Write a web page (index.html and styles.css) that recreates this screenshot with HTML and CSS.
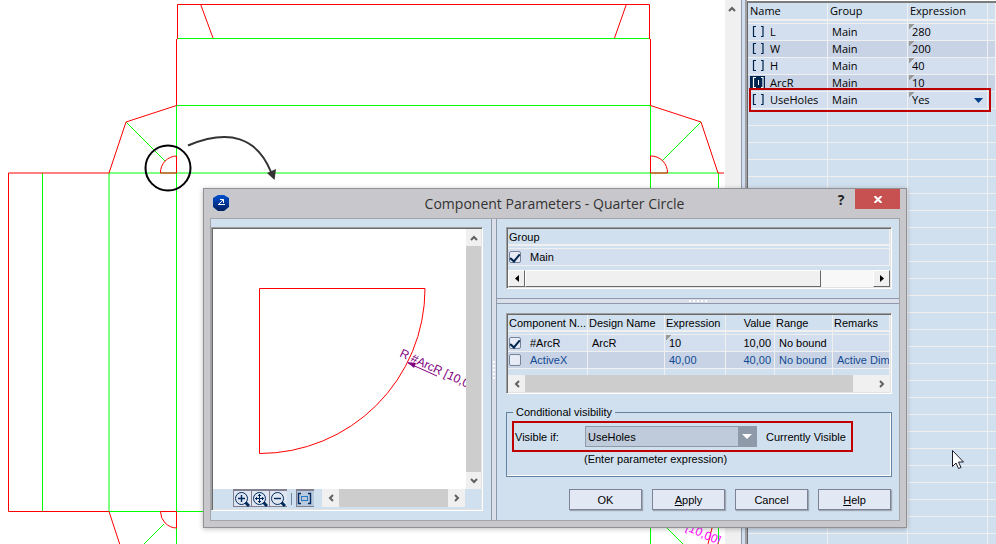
FILE: index.html
```
<!DOCTYPE html>
<html lang="en">
<head>
    <meta charset="UTF-8">
    <meta name="viewport" content="width=device-width, initial-scale=1.0">
    <title>Component Parameters - Quarter Circle</title>
    <link rel="stylesheet" href="styles.css">
</head>
<body>
    <svg class="defs" width="0" height="0">
        <symbol id="up" viewBox="0 0 8 6"><path d="M1 5L4 2L7 5" fill="none" stroke="#606060" stroke-width="2"/></symbol>
        <symbol id="down" viewBox="0 0 8 6"><path d="M1 1L4 4L7 1" fill="none" stroke="#606060" stroke-width="2"/></symbol>
        <symbol id="left" viewBox="0 0 6 8"><path d="M5 1L2 4L5 7" fill="none" stroke="#606060" stroke-width="2"/></symbol>
        <symbol id="right" viewBox="0 0 6 8"><path d="M1 1L4 4L1 7" fill="none" stroke="#606060" stroke-width="2"/></symbol>
        <symbol id="brackets" viewBox="0 0 13 11"><path d="M5 .5H2.500V10.500H5M10 .5h2v10H10" fill="none" stroke="currentColor" stroke-width="1.200"/></symbol>
    </svg>

    <main class="workspace">
        <div class="canvas">
            <svg class="drawing" fill="none">
                <g stroke="#00ff00">
                    <path d="M177 38.500H650M177 105.500H650M109 173H718M109 511.500H725"/>
                    <path d="M42.500 173V511M109 173V511M176.500 105V544M650.500 105V544M718.500 173V544"/>
                    <path d="M126 122L165 161M701 122L662 161M164 524L144 544M662 523L683 544"/>
                </g>
                <g stroke="#ff0000">
                    <path d="M177.500 39V4.500H649.500V39M200.500 4L213 38M626.500 4L614.500 38"/>
                    <path d="M176.500 39V105.500L126 122L109 173H8.500V511.500H109L120 545"/>
                    <path d="M650.500 39V105.500L701 122L718 173H724M712 528L708 544"/>
                    <path d="M176.500 156V173H160.500A16.500 16.500 0 0 1 176.500 156"/>
                    <path d="M650.500 156V173H667.500A16.500 16.500 0 0 0 650.500 156"/>
                    <path d="M176.500 528V511.500H160.500A16.500 16.500 0 0 0 176.500 528"/>
                </g>
                <circle cx="168" cy="168" r="22.500" stroke="#000" stroke-width="2"/>
                <path d="M188 145.500Q250 120 271 172" stroke="#333" stroke-width="2"/>
                <path d="M267 173L276 169L274.500 180Z" fill="#333"/>
                <text x="685" y="530" transform="rotate(24 685 530)" class="dim-pink">[10,00]</text>
            </svg>
        </div>
        <div class="main-scroll"><svg width="8" height="6"><use href="#up"/></svg></div>
        <div class="divider"></div>
        <section class="params">
            <table>
                <colgroup><col class="c80"><col class="c80"><col class="c80"><col></colgroup>
                <thead>
                    <tr><th>Name</th><th>Group</th><th>Expression</th><th></th></tr>
                </thead>
                <tbody>
                    <tr><td><svg class="br"><use href="#brackets"/></svg>L</td><td>Main</td><td class="expr">280</td><td></td></tr>
                    <tr><td><svg class="br"><use href="#brackets"/></svg>W</td><td>Main</td><td class="expr">200</td><td></td></tr>
                    <tr><td><svg class="br"><use href="#brackets"/></svg>H</td><td>Main</td><td class="expr">40</td><td></td></tr>
                    <tr><td><svg class="br on"><use href="#brackets"/><path d="M7.500 3V8" stroke="#fff"/></svg>ArcR</td><td>Main</td><td class="expr">10</td><td></td></tr>
                    <tr><td><svg class="br"><use href="#brackets"/></svg>UseHoles</td><td>Main</td><td class="expr"><div class="yes"><select aria-label="UseHoles"><option>Yes</option></select><svg width="9" height="5"><path d="M0 0H9L4.500 5Z" fill="#003f87"/></svg></div></td><td></td></tr>
                </tbody>
            </table>
            <div class="empty-rows"></div>
            <div class="highlight"></div>
        </section>
    </main>

    <div class="dialog" role="dialog" aria-labelledby="dlg-title">
        <header class="titlebar">
            <svg class="app-icon" width="16" height="16" viewBox="0 0 16 16">
                <defs><linearGradient id="blue" x2="0" y2="1"><stop stop-color="#0050d0"/><stop offset="1" stop-color="#001f60"/></linearGradient></defs>
                <path d="M5 0H11L16 3V12L11 16H5L0 12V3Z" fill="url(#blue)"/>
                <path d="M7 4.500H10.500V8M10.500 4.500L6 9M5 9.500H12" fill="none" stroke="#fff"/>
            </svg>
            <h1 id="dlg-title">Component Parameters - Quarter Circle</h1>
            <button class="help">?</button>
            <button class="close" aria-label="Close"><svg width="8" height="7"><path d="M.5 0L7.500 7M7.500 0L.5 7" stroke="#fff" stroke-width="2"/></svg></button>
        </header>
        <div class="client">
            <div class="left-pane">
                <div class="preview sunken">
                    <div class="preview-top">
                        <svg class="shape" fill="none">
                            <path d="M46.500 59.500H212A165.500 165 0 0 1 46.500 224.500Z" stroke="#ff0000"/>
                            <text x="186" y="127" transform="rotate(25 186 127)" class="dim">R #ArcR [10,00]</text>
                            <path d="M195 134L224 147" stroke="#800080"/>
                            <path d="M194 133L203 134L201 139Z" fill="#800080"/>
                        </svg>
                        <div class="vscroll">
                            <button aria-label="Up"><svg width="8" height="6"><use href="#up"/></svg></button>
                            <span class="thumb"></span>
                            <button aria-label="Down"><svg width="8" height="6"><use href="#down"/></svg></button>
                        </div>
                    </div>
                    <div class="toolbar">
                        <button class="tool" aria-label="Zoom in"><svg width="16" height="16" fill="none" stroke="#002a5c"><circle cx="7.500" cy="7.500" r="6"/><path d="M4 7.500H11M7.500 4V11" stroke-width="1.400"/><path d="M11.500 11.500L15 15" stroke-width="3"/></svg></button>
                        <button class="tool" aria-label="Zoom to fit"><svg width="16" height="16" fill="none" stroke="#002a5c"><circle cx="7.500" cy="7.500" r="6"/><path d="M3 7.500H12M7.500 3V12M6 4.500H9M6 10.500H9M4.500 6V9M10.500 6V9"/><path d="M11.500 11.500L15 15" stroke-width="3"/></svg></button>
                        <button class="tool" aria-label="Zoom out"><svg width="16" height="16" fill="none" stroke="#002a5c"><circle cx="7.500" cy="7.500" r="6"/><path d="M4 7.500H11" stroke-width="1.400"/><path d="M11.500 11.500L15 15" stroke-width="3"/></svg></button>
                        <span class="sep"></span>
                        <button class="tool pressed" aria-label="Show dimensions"><svg width="16" height="16" fill="none" stroke="#002a5c"><path d="M4 2.500H1.500V12.500H4M11 2.500H13.500V12.500H11" stroke-width="1.400"/><rect x="4.500" y="5.500" width="6" height="4" stroke="#2a78c0"/></svg></button>
                        <div class="hscroll">
                            <button aria-label="Left"><svg width="6" height="8"><use href="#left"/></svg></button>
                            <span class="thumb"></span>
                            <button aria-label="Right"><svg width="6" height="8"><use href="#right"/></svg></button>
                        </div>
                    </div>
                </div>
            </div>
            <div class="splitter-v"><span></span></div>
            <div class="right-pane">
                <div class="sunken group-list">
                    <table>
                        <thead><tr><th>Group</th></tr></thead>
                        <tbody><tr><td><label class="check"><input type="checkbox" checked>Main</label></td></tr></tbody>
                    </table>
                    <div class="classic-scroll">
                        <button aria-label="Left"><svg width="4" height="7"><path d="M4 0V7L0 3.500Z"/></svg></button>
                        <span class="thumb"></span>
                        <span class="track"></span>
                        <button aria-label="Right"><svg width="4" height="7"><path d="M0 0V7L4 3.500Z"/></svg></button>
                    </div>
                </div>
                <div class="splitter-h"><span></span></div>
                <div class="sunken components">
                    <table>
                        <colgroup><col class="c80"><col class="c77"><col class="c61"><col class="c49"><col class="c58"><col></colgroup>
                        <thead>
                            <tr><th>Component N...</th><th>Design Name</th><th>Expression</th><th class="num">Value</th><th>Range</th><th>Remarks</th></tr>
                        </thead>
                        <tbody>
                            <tr><td><label class="check"><input type="checkbox" checked>#ArcR</label></td><td>ArcR</td><td class="expr">10</td><td class="num">10,00</td><td>No bound</td><td></td></tr>
                            <tr class="dimmed"><td><label class="check"><input type="checkbox">ActiveX</label></td><td></td><td>40,00</td><td class="num">40,00</td><td>No bound</td><td>Active Dime</td></tr>
                            <tr class="blank"><td></td><td></td><td></td><td></td><td></td><td></td></tr>
                        </tbody>
                    </table>
                    <div class="hscroll">
                        <button aria-label="Left"><svg width="6" height="8"><use href="#left"/></svg></button>
                        <span class="thumb"></span>
                        <span class="rest"></span>
                        <button aria-label="Right"><svg width="6" height="8"><use href="#right"/></svg></button>
                    </div>
                </div>
                <fieldset>
                    <legend>Conditional visibility</legend>
                    <div class="visible-row">
                        <label for="visible-if">Visible if:</label>
                        <div class="combo">
                            <select id="visible-if"><option>UseHoles</option></select>
                            <span class="combo-arrow"><svg width="10" height="5"><path d="M0 0H10L5 5Z" fill="#fff"/></svg></span>
                        </div>
                        <span>Currently Visible</span>
                    </div>
                    <p>(Enter parameter expression)</p>
                </fieldset>
                <div class="actions">
                    <button>OK</button>
                    <button><u>A</u>pply</button>
                    <button>Cancel</button>
                    <button><u>H</u>elp</button>
                </div>
            </div>
        </div>
    </div>

    <svg class="cursor" width="12" height="20"><path d="M.5 .5V16.500L4 13L6.500 18.500L9 17.500L6.500 12H11.500Z" fill="#fff" stroke="#1a1a2a"/></svg>
</body>
</html>
```
FILE: styles.css
```
* {
    box-sizing: border-box;
}

body {
    margin: 0;
    height: 100vh;
    overflow: hidden;
    position: relative;
    font-family: "Liberation Sans", Arial, sans-serif;
    font-size: 11px;
    line-height: 16px;
    color: #000;
    background: #fff;
}

svg {
    display: block;
    flex: none;
}

.defs {
    position: absolute;
}

button,
select {
    font: inherit;
    color: inherit;
    padding: 0;
    margin: 0;
    border: 0;
    background: none;
}

select {
    appearance: none;
    outline: none;
}

table {
    width: 100%;
    table-layout: fixed;
    border-spacing: 0;
}

th,
td {
    padding: 0 0 0 4px;
    height: 17px;
    text-align: left;
    font-weight: normal;
    white-space: nowrap;
    overflow: hidden;
    border-right: 1px solid #f0f0f0;
    border-bottom: 1px solid #f0f0f0;
}

th {
    height: 20px;
    padding: 0 0 0 1px;
    vertical-align: top;
    background: linear-gradient(#f0f0f0, #f0f0f0) 0 calc(100% - 2px) / 100% 2px no-repeat;
}

tbody tr {
    background: #d3deee;
}

tbody tr:nth-child(even) {
    background: #c8d3e5;
}

.expr {
    background: linear-gradient(135deg, #999 4px, transparent 4px) 1px 0 no-repeat;
}

.c80 { width: 80px; }
.c77 { width: 77px; }
.c61 { width: 61px; }
.c49 { width: 49px; }
.c58 { width: 58px; }

/* workspace */
.workspace {
    display: flex;
    height: 100%;
}

.canvas {
    flex: 1;
    min-width: 0;
    overflow: hidden;
}

.drawing {
    width: 100%;
    height: 100%;
}

.dim-pink {
    font-size: 12px;
    fill: #f0f;
}

.dim {
    font-size: 12px;
    fill: #800080;
}

.main-scroll {
    width: 16px;
    padding: 6px 3px;
    background: #f0f0f0;
}

.divider {
    width: 6px;
    background: #d2deee;
    border-left: 1px solid #8f9aae;
    border-right: 2px solid #a0a0a4;
}

/* parameter list on the right */
.params {
    position: relative;
    display: flex;
    flex-direction: column;
    width: 249px;
    margin-top: 1px;
    border-top: 2px solid #7c7c7c;
    border-left: 1px solid #696969;
    background: #d1e0ef;
    font-family: "Open Sans", sans-serif;
}

.params th {
    height: 21px;
    padding-left: 2px;
}

.params td {
    padding-right: 4px;
}

.params td:first-child {
    padding: 0 0 0 2px;
}

.br {
    display: inline-block;
    vertical-align: top;
    width: 15px;
    height: 13px;
    margin: 1px 5px 0 0;
    padding: 1px;
    color: #00264f;
}

.br.on {
    background: #00264f;
    color: #fff;
}

.yes {
    display: flex;
    align-items: center;
    justify-content: space-between;
}

.yes select {
    width: 40px;
    height: 16px;
}

.empty-rows {
    flex: 1;
    background:
        linear-gradient(90deg, transparent 79px, #f0f0f0 79px, #f0f0f0 80px, transparent 80px) 0 0 / 80px 100%,
        repeating-linear-gradient(#d1e0ef 0, #d1e0ef 16px, #f0f0f0 16px, #f0f0f0 17px);
}

.highlight {
    position: absolute;
    top: 85px;
    left: 1px;
    right: 5px;
    height: 24px;
    border: 2px solid #c00000;
}

/* dialog window */
.dialog {
    position: absolute;
    top: 188px;
    left: 203px;
    width: 704px;
    padding: 0 6px 6px;
    border: 1px solid #8f9195;
    background: #c8c8cc;
    box-shadow: 0 1px 5px rgba(0, 0, 0, 0.25);
}

.titlebar {
    display: flex;
    align-items: flex-start;
    height: 29px;
}

.app-icon {
    margin: 6px 0 0 3px;
}

.titlebar h1 {
    flex: 1;
    margin: 5px 0 0;
    padding-left: 53px;
    text-align: center;
    font: 14px/20px "Open Sans", sans-serif;
    color: #333;
}

.help {
    width: 28px;
    height: 20px;
    font: bold 14px "Open Sans", sans-serif;
    color: #222;
}

.close {
    display: flex;
    align-items: center;
    justify-content: center;
    width: 45px;
    height: 20px;
    background: #c75050;
}

.client {
    display: flex;
    height: 303px;
    border: 1px solid #a3a5a9;
    background: #d1e0ef;
}

.sunken {
    display: flex;
    flex-direction: column;
    padding: 1px;
    border: 1px solid;
    border-color: #a0a0a0 #fff #fff #a0a0a0;
    box-shadow: inset 1px 1px #696969, inset -1px -1px #e3e3e3;
}

.left-pane {
    display: flex;
    flex: none;
    width: 280px;
    padding: 8px 8px 9px 0;
}

.preview {
    flex: 1;
    min-width: 0;
}

.preview-top {
    display: flex;
    flex: 1;
    background: #fff;
}

.shape {
    flex: 1;
    width: 0;
    min-width: 0;
    height: 100%;
    overflow: hidden;
}

.vscroll {
    display: flex;
    flex-direction: column;
    width: 15px;
    background: #f0f0f0;
}

.vscroll button,
.hscroll button {
    display: flex;
    align-items: center;
    justify-content: center;
    flex: none;
    width: 17px;
    height: 17px;
}

.vscroll button {
    width: 15px;
}

.vscroll .thumb,
.hscroll .thumb {
    flex: 1;
    background: #cdcdcd;
}

.hscroll {
    display: flex;
    background: #f0f0f0;
}

.toolbar {
    display: flex;
    height: 20px;
    padding: 0 16px 2px 20px;
}

.tool {
    width: 18px;
    border: 1px solid #808090;
    border-width: 2px 0 1px 1px;
    background: #dfe6f2;
}

.sep {
    width: 1px;
    margin: 4px 4px 2px;
    background: #6f86a3;
}

.pressed {
    background: #b9c9de;
}

.toolbar .hscroll {
    flex: 1;
    margin-left: 8px;
}

.splitter-v {
    display: flex;
    flex: none;
    align-items: center;
    justify-content: center;
    width: 6px;
    border: 1px solid #8e99ad;
    border-width: 0 1px;
    background: #dadfea;
}

.splitter-v span {
    width: 2px;
    height: 18px;
    background: repeating-linear-gradient(#fff 0, #fff 2px, transparent 2px, transparent 4px);
}

.right-pane {
    flex: 1;
    min-width: 0;
    padding-top: 8px;
}

.right-pane .sunken {
    margin: 0 7px 9px 9px;
}

.group-list {
    height: 62px;
}

.check {
    display: flex;
    align-items: center;
    gap: 9px;
}

.right-pane td:first-child {
    padding-left: 1px;
}

.check input {
    appearance: none;
    display: flex;
    justify-content: center;
    width: 12px;
    height: 12px;
    margin: 0;
    border: 1px solid #76839a;
    border-radius: 2px;
    background: #e6ebf5;
}

.check input:checked::before {
    content: "";
    width: 4px;
    height: 8px;
    border: solid #00264f;
    border-width: 0 2px 2px 0;
    transform: rotate(40deg);
}

.classic-scroll {
    display: flex;
    height: 17px;
    margin-top: auto;
}

.classic-scroll button,
.classic-scroll .thumb {
    display: flex;
    align-items: center;
    justify-content: center;
    width: 17px;
    border: 1px solid;
    border-color: #fff #696969 #696969 #fff;
    background: #f0f0f0;
}

.classic-scroll .thumb {
    flex: 296;
}

.track {
    flex: 52;
    background: #f8f8f8;
}

.splitter-h {
    display: flex;
    align-items: center;
    justify-content: center;
    height: 6px;
    margin-bottom: 9px;
    border: 1px solid #8e99ad;
    border-width: 1px 0;
    background: #dadfea;
}

.splitter-h span {
    width: 18px;
    height: 2px;
    background: repeating-linear-gradient(90deg, #fff 0, #fff 2px, transparent 2px, transparent 4px);
}

.components {
    height: 81px;
}

.right-pane .components {
    margin-bottom: 12px;
}

.components .num {
    text-align: right;
    padding: 0 3px 0 0;
}

.dimmed {
    color: #114a94;
}

tbody .blank {
    background: none;
}

.blank td {
    height: 6px;
    border-bottom: 0;
}

.components .hscroll {
    height: 17px;
}

.rest {
    width: 20px;
}

fieldset {
    min-width: 0;
    height: 71px;
    margin: 0 7px 12px 9px;
    padding: 3px 5px 0;
    border: 1px solid #6381a3;
    box-shadow: inset -1px -1px #fff;
}

legend {
    margin-left: 1px;
    padding: 0 3px;
    line-height: 12px;
}

.visible-row {
    display: flex;
    align-items: center;
    width: 341px;
    height: 31px;
    padding-left: 1px;
    border: 2px solid #c00000;
}

.visible-row label {
    width: 70px;
}

.combo {
    display: flex;
    width: 172px;
    height: 21px;
    margin-right: 9px;
    border: 1px solid #8f9aa8;
    background: #bfcbdb;
}

.combo select {
    flex: 1;
    min-width: 0;
    padding-left: 2px;
}

.combo-arrow {
    display: flex;
    align-items: center;
    justify-content: center;
    width: 18px;
    background: #8f9aa8;
}

fieldset p {
    margin: 0 0 0 72px;
    line-height: 14px;
}

.actions {
    display: flex;
    justify-content: flex-end;
    gap: 10px;
    margin-right: 8px;
}

.actions button {
    width: 73px;
    height: 21px;
    border: 1px solid #7d8296;
    background: #e2e8f4;
    box-shadow: 1px 1px 1px rgba(0, 0, 0, 0.25);
}

.cursor {
    position: absolute;
    left: 952px;
    top: 450px;
}
```
